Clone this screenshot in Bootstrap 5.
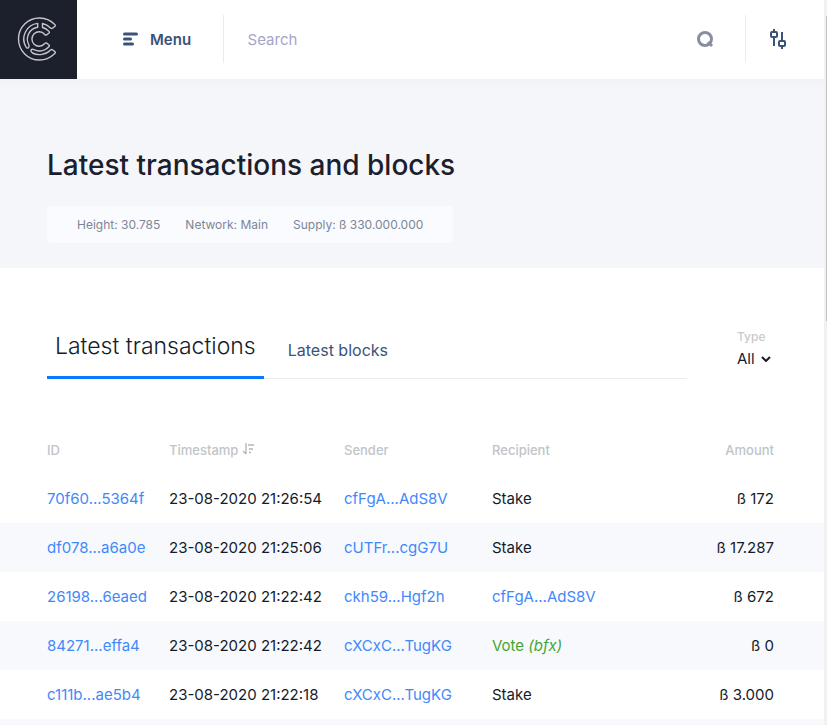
<!DOCTYPE html>
<html lang="en">
<head>
<meta charset="utf-8">
<meta name="viewport" content="width=device-width, initial-scale=1">
<title>Latest transactions and blocks</title>
<link href="https://cdn.jsdelivr.net/npm/bootstrap@5.3.0/dist/css/bootstrap.min.css" rel="stylesheet">
<style>
body { font-family: Inter, "Liberation Sans", sans-serif; font-size: 15px; line-height: 24px; color: #141b2b; }
a { color: #4189fb; text-decoration: none; }
.brand-tile { width: 77px; background: #1b202c; }
.topbar { height: 79px; }
.menu-btn { margin-left: 46px; padding: 0 32px 0 0; gap: 12px; font-size: 15px; font-weight: 600; line-height: 24px; color: #3a5379; }
.menu-btn span { padding-top: 2px; }
.rule, .find-btn, .settings-btn, .menu-btn { margin-bottom: 2px; }
.rule { width: 1px; height: 48px; background: #ebebed; }
.search-box { padding: 2px 24px 0; font-size: 15px; color: #3a5379; }
.search-box::placeholder { color: #a3a6c6; opacity: 1; }
.find-btn { width: 80px; }
.settings-btn { width: 64px; margin-right: 14px; }
.topbar svg { display: block; margin: 0 auto; }
.hero { padding: 68px 47px 25px; background: linear-gradient(#f1f2f7, #f5f6fa 12px); }
.hero h1 { font-size: 28px; line-height: 36px; font-weight: 500; margin-bottom: 23px; color: #1b202c; }
.facts { gap: 25px; padding: 7px 30px 6px; border-radius: 4px; background: #fafbff; font-size: 12px; color: #7d8596; }
.filters { padding: 57px 47px 0; }
.tab-strip { margin-right: 50px; border-bottom: 1px solid #ebebed; }
.tab-strip .nav-link { padding: 0 24px 14px; font-size: 16px; color: #3a5379; border-bottom: 3px solid transparent; margin-bottom: -1px; }
.tab-strip .nav-link.active { padding: 0 8px 14px; font-size: 23px; font-weight: 300; line-height: 32px; color: #141b2b; border-color: #077bff; }
.type-box { width: 40px; margin-bottom: 10px; }
.type-box label { font-size: 12px; line-height: 24px; font-weight: 500; color: #c8cacd; }
.type-pick { appearance: none; border: 0; background: transparent; padding: 0; width: 24px; font-size: 15px; line-height: 20px; color: #141b2b; }
.ledger { margin-top: 46px; --bs-table-color: #141b2b; }
.ledger th, .ledger td { padding: 13px 0 12px; border: 0; white-space: nowrap; }
.ledger thead th { font-size: 13px; font-weight: 500; color: #c1c4c8; }
.ledger tbody tr:nth-child(even) td { background: #f7f9fd; box-shadow: none; }
.ledger tr > :first-child { padding-left: 47px; width: 169px; }
.ledger tr > :nth-child(2) { width: 175px; }
.ledger tr > :nth-child(3) { width: 148px; }
.ledger tr > :last-child { padding-right: 50px; }
.vote { color: #43a535; }
.scroll-track { width: 3px; padding: 16px 0 0 2px; background: #f1f1f1; }
.scroll-thumb { height: 42vh; background: #c1c1c1; }
</style>
</head>
<body>
<div class="d-flex vh-100 overflow-hidden">
<div class="flex-grow-1 overflow-hidden">
<header class="topbar d-flex align-items-center bg-white">
<a href="#" class="brand-tile h-100 d-flex align-items-center justify-content-center flex-shrink-0" aria-label="Home">
<svg width="43" height="45" viewBox="17 17 43 45" fill="none" stroke="#c4c6c9" stroke-width="1.400" stroke-linejoin="round"><path d="M54.500 24.300A21 21 0 1 0 54.500 53.700Q56 52.500 55 51.700L52.500 49.800Q51.500 49.200 50.500 50A15.700 15.700 0 0 1 32.500 53Q30.500 51.500 31 50Q32 48.700 34 49.700A12 12 0 0 0 48.500 47Q50 46 49 45L46.500 43Q45.500 42.500 44.500 43.800A7.200 7.200 0 1 1 44.500 34.200Q45.500 35.500 46.500 35L49 33Q50 32 48.500 31A12 12 0 0 0 42.500 27.500V23.500A15.700 15.700 0 0 1 50.500 28Q51.500 28.800 52.500 28.200L55 26.300Q56 25.500 54.500 24.300Z"/><path d="M37.700 23.400V27.300A12 12 0 0 0 28.900 45Q29.500 47 28.200 48Q26.800 48.500 26 47A15.700 15.700 0 0 1 37.700 23.400Z"/></svg>
</a>
<button type="button" class="menu-btn btn border-0 d-flex align-items-center">
<svg width="15" height="14" viewBox="0 0 15 14" stroke="#3a5379" stroke-width="3" stroke-linecap="round"><path d="M1.500 2H13.500M1.500 7H7.500M1.500 12H9.500"/></svg>
<span>Menu</span></button>
<span class="rule"></span>
<input type="search" class="search-box form-control border-0 bg-transparent shadow-none flex-grow-1" placeholder="Search" aria-label="Search">
<button type="button" class="find-btn btn border-0 p-0 flex-shrink-0" aria-label="Find">
<svg width="18" height="18" viewBox="0 0 18 18" fill="none" stroke="#868e9f" stroke-width="3"><circle cx="9" cy="9" r="6.500"/><path d="M12 12L16 16"/></svg></button>
<span class="rule"></span>
<button type="button" class="settings-btn btn border-0 p-0 flex-shrink-0" aria-label="Settings">
<svg width="18" height="20" viewBox="0 0 18 20" fill="none" stroke="#3a5379" stroke-width="2"><path d="M5 0V3M5 8V17M13 3V12M13 17V20"/><rect x="2" y="3" width="6" height="5" rx="1"/><rect x="10" y="12" width="6" height="5" rx="1"/></svg></button>
</header>
<section class="hero">
<h1>Latest transactions and blocks</h1>
<div class="facts d-inline-flex"><span>Height: 30.785</span><span>Network: Main</span><span>Supply: ß 330.000.000</span></div>
</section>
<main>
<div class="filters d-flex align-items-end">
<nav class="tab-strip nav flex-grow-1 align-items-end">
<a href="#" class="nav-link active" aria-current="page">Latest transactions</a>
<a href="#" class="nav-link">Latest blocks</a>
</nav>
<div class="type-box">
<label for="type" class="d-block">Type</label>
<div class="d-flex align-items-center"><select id="type" class="type-pick"><option>All</option></select>
<svg width="10" height="6" viewBox="0 0 10 6" fill="none" stroke="#141b2b" stroke-width="2"><path d="M1 1L5 5L9 1"/></svg></div>
</div>
</div>
<table class="ledger table mb-0">
<thead><tr><th scope="col">ID</th><th scope="col">Timestamp <svg class="align-baseline" width="13" height="12" viewBox="0 0 13 12" fill="none" stroke="#b4b7bc" stroke-width="1.400"><path d="M4 0V11M1 8L4 11M6 2H12M7 6H11M7 9.500H9"/></svg></th><th scope="col">Sender</th><th scope="col">Recipient</th><th scope="col" class="text-end">Amount</th></tr></thead>
<tbody>
<tr><td><a href="#">70f60...5364f</a></td><td>23-08-2020 21:26:54</td><td><a href="#">cfFgA...AdS8V</a></td><td>Stake</td><td class="text-end">ß 172</td></tr>
<tr><td><a href="#">df078...a6a0e</a></td><td>23-08-2020 21:25:06</td><td><a href="#">cUTFr...cgG7U</a></td><td>Stake</td><td class="text-end">ß 17.287</td></tr>
<tr><td><a href="#">26198...6eaed</a></td><td>23-08-2020 21:22:42</td><td><a href="#">ckh59...Hgf2h</a></td><td><a href="#">cfFgA...AdS8V</a></td><td class="text-end">ß 672</td></tr>
<tr><td><a href="#">84271...effa4</a></td><td>23-08-2020 21:22:42</td><td><a href="#">cXCxC...TugKG</a></td><td><span class="vote">Vote <em>(bfx)</em></span></td><td class="text-end">ß 0</td></tr>
<tr><td><a href="#">c111b...ae5b4</a></td><td>23-08-2020 21:22:18</td><td><a href="#">cXCxC...TugKG</a></td><td>Stake</td><td class="text-end">ß 3.000</td></tr>
<tr><td colspan="5">&nbsp;</td></tr>
</tbody>
</table>
</main>
</div>
<div class="scroll-track flex-shrink-0" aria-hidden="true"><div class="scroll-thumb"></div></div>
</div>
<script src="https://cdn.jsdelivr.net/npm/bootstrap@5.3.0/dist/js/bootstrap.bundle.min.js"></script>
</body>
</html>
